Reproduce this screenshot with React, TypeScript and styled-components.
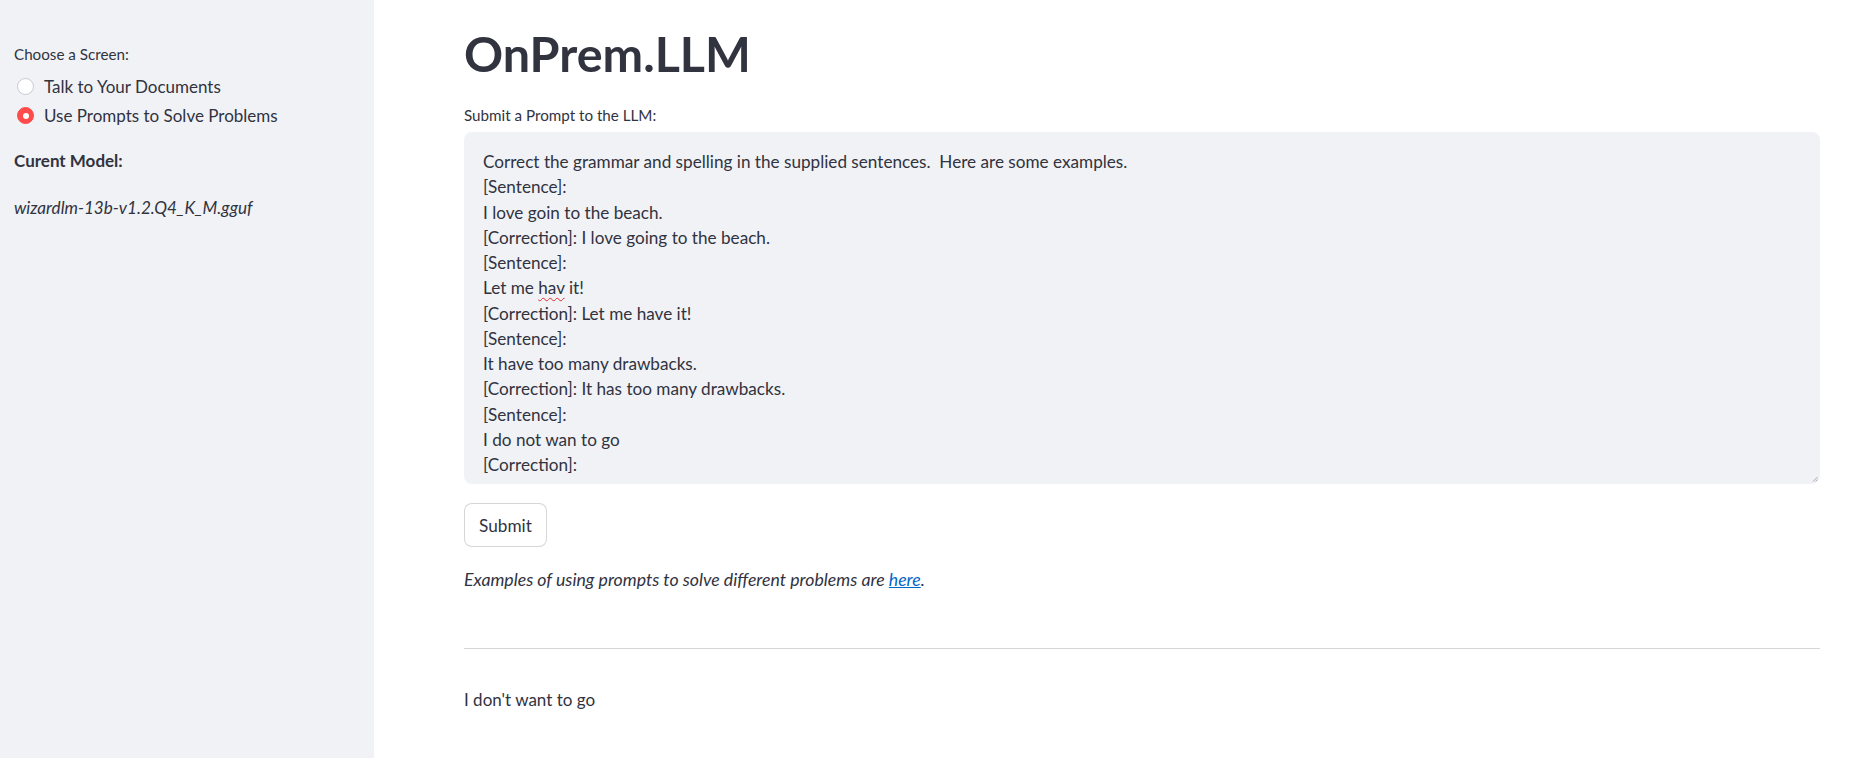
import styled, { createGlobalStyle } from 'styled-components';

const TEXT = '#31333f';
const SIDEBAR_BG = '#f0f2f6';
const ACCENT = '#ff4b4b';
const BORDER = 'rgba(49, 51, 63, 0.2)';

const GlobalStyle = createGlobalStyle`
  html, body {
    margin: 0;
    padding: 0;
    background: #ffffff;
  }
  body {
    font-family: 'Source Sans Pro', Lato, 'Noto Sans', sans-serif;
    color: ${TEXT};
    -webkit-font-smoothing: antialiased;
  }
  * {
    box-sizing: border-box;
  }
`;

const screens = ['Talk to Your Documents', 'Use Prompts to Solve Problems'];

const promptLines = [
  'Correct the grammar and spelling in the supplied sentences.  Here are some examples.',
  '[Sentence]:',
  'I love goin to the beach.',
  '[Correction]: I love going to the beach.',
  '[Sentence]:',
  'HAV',
  '[Correction]: Let me have it!',
  '[Sentence]:',
  'It have too many drawbacks.',
  '[Correction]: It has too many drawbacks.',
  '[Sentence]:',
  'I do not wan to go',
  '[Correction]:',
];

const App = () => {
  const selected = 1;

  return (
    <>
      <GlobalStyle />
      <Page>
        <Sidebar>
          <WidgetLabel>Choose a Screen:</WidgetLabel>
          <RadioGroup>
            {screens.map((label, idx) => (
              <RadioRow key={label}>
                <RadioDot $checked={idx === selected} />
                <RadioText>{label}</RadioText>
              </RadioRow>
            ))}
          </RadioGroup>
          <ModelHeading>Curent Model:</ModelHeading>
          <ModelName>wizardlm-13b-v1.2.Q4_K_M.gguf</ModelName>
        </Sidebar>

        <Main>
          <Title>OnPrem.LLM</Title>
          <PromptLabel>Submit a Prompt to the LLM:</PromptLabel>
          <PromptBox>
            <PromptText>
              {promptLines.map((line, idx) =>
                line === 'HAV' ? (
                  <PromptLine key={idx}>
                    Let me <Misspelled>hav</Misspelled> it!
                  </PromptLine>
                ) : (
                  <PromptLine key={idx}>{line}</PromptLine>
                ),
              )}
            </PromptText>
            <ResizeGrip width="6" height="6" viewBox="0 0 6 6">
              <path d="M5.5 1 L1 5.5 M5.5 3.5 L3.5 5.5" stroke="#9a9aa0" strokeWidth="0.8" />
            </ResizeGrip>
          </PromptBox>
          <SubmitButton type="button">Submit</SubmitButton>
          <Caption>
            Examples of using prompts to solve different problems are <CaptionLink href="#">here</CaptionLink>.
          </Caption>
          <Divider />
          <Answer>I don&apos;t want to go</Answer>
        </Main>
      </Page>
    </>
  );
};

const Page = styled.div`
  display: flex;
  min-height: 758px;
`;

const Sidebar = styled.aside`
  width: 374px;
  flex: 0 0 374px;
  background: ${SIDEBAR_BG};
  padding: 44px 14px 0 14px;
  display: flex;
  flex-direction: column;
`;

const WidgetLabel = styled.div`
  font-size: 15.2px;
  line-height: 20px;
  color: ${TEXT};
`;

const RadioGroup = styled.div`
  display: flex;
  flex-direction: column;
  margin-top: 8px;
`;

const RadioRow = styled.label`
  display: flex;
  align-items: center;
  height: 29px;
  padding-left: 3px;
  gap: 10px;
`;

const RadioDot = styled.span<{ $checked: boolean }>`
  width: 17px;
  height: 17px;
  border-radius: 50%;
  flex: 0 0 17px;
  background: ${(p) => (p.$checked ? ACCENT : '#ffffff')};
  border: 1px solid ${(p) => (p.$checked ? ACCENT : '#c9cad0')};
  display: flex;
  align-items: center;
  justify-content: center;
  &::after {
    content: '';
    display: ${(p) => (p.$checked ? 'block' : 'none')};
    width: 6px;
    height: 6px;
    border-radius: 50%;
    background: #ffffff;
  }
`;

const RadioText = styled.span`
  font-size: 17px;
  line-height: 24px;
`;

const ModelHeading = styled.div`
  margin-top: 19px;
  font-size: 17px;
  line-height: 24px;
  font-weight: 700;
`;

const ModelName = styled.div`
  margin-top: 23px;
  font-size: 17.1px;
  line-height: 24px;
  font-style: italic;
`;

const Main = styled.main`
  flex: 1;
  padding: 23px 55px 0 90px;
  display: flex;
  flex-direction: column;
  align-items: flex-start;
`;

const Title = styled.h1`
  margin: 0;
  font-size: 48.5px;
  line-height: 60px;
  font-weight: 700;
  color: ${TEXT};
`;

const PromptLabel = styled.div`
  margin-top: 22px;
  font-size: 15.2px;
  line-height: 20px;
`;

const PromptBox = styled.div`
  position: relative;
  margin-top: 7px;
  width: 100%;
  height: 352px;
  background: ${SIDEBAR_BG};
  border-radius: 8px;
  overflow: hidden;
`;

const PromptText = styled.div`
  padding: 17px 19px 0 19px;
  font-size: 17.15px;
  line-height: 25.25px;
`;

const PromptLine = styled.div`
  white-space: pre;
`;

const Misspelled = styled.span`
  text-decoration-line: underline;
  text-decoration-style: wavy;
  text-decoration-color: #e0282a;
  text-decoration-thickness: 1px;
  text-underline-offset: 3px;
`;

const ResizeGrip = styled.svg`
  position: absolute;
  right: 2px;
  bottom: 2px;
`;

const SubmitButton = styled.button`
  margin-top: 19px;
  height: 44px;
  padding: 0 14px;
  min-width: 83px;
  background: #ffffff;
  border: 1px solid ${BORDER};
  border-radius: 8px;
  font-family: inherit;
  font-size: 17.2px;
  color: ${TEXT};
  cursor: pointer;
`;

const Caption = styled.p`
  margin: 20px 0 0 0;
  font-size: 17.7px;
  line-height: 26px;
  font-style: italic;
`;

const CaptionLink = styled.a`
  color: #0068c9;
  text-decoration: underline;
`;

const Divider = styled.hr`
  margin: 55px 0 0 0;
  width: 100%;
  border: none;
  border-top: 1px solid ${BORDER};
`;

const Answer = styled.p`
  margin: 38px 0 0 0;
  font-size: 17px;
  line-height: 26px;
`;

export default App;
